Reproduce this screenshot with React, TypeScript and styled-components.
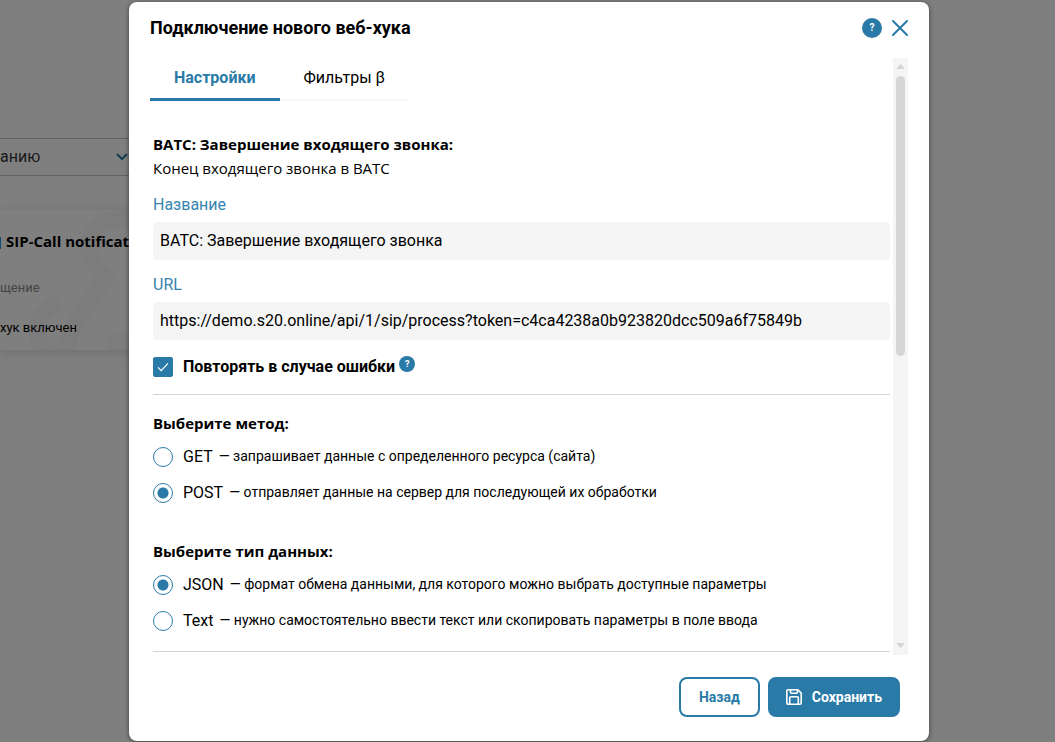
import React, { useId, useState } from "react";
import styled, { createGlobalStyle } from "styled-components";

const accent = "#2a7aa8";
const uiFont = `Roboto, "Liberation Sans", sans-serif`;
const headingFont = `"Open Sans", "Noto Sans", sans-serif`;

const GlobalStyle = createGlobalStyle`
  * { box-sizing: border-box; }
  html, body, #root { height: 100%; }
  body {
    margin: 0;
    overflow: hidden;
    background: #fff;
    color: #000;
    font: 16px/24px ${uiFont};
  }
  h1, h2, p, fieldset, legend { margin: 0; padding: 0; border: 0; }
  button, input, select { font: inherit; color: inherit; margin: 0; }
`;

/* Page behind the dialog */
const Page = styled.main`
  position: absolute;
  inset: 0;
  overflow: hidden;
  display: flex;
  flex-direction: column;
  gap: 34px;
  padding: 138px 0 0;
`;

const SortBar = styled.div`
  width: calc(50vw - 389px);
  height: 38px;
  display: flex;
  align-items: center;
  justify-content: space-between;
  padding-right: 11px;
  border: solid #c4c4c4;
  border-width: 1px 0;
  color: #333;
`;

const HookCard = styled.article`
  position: relative;
  width: calc(50vw - 320px);
  height: 140px;
  padding: 19px 0 0;
  overflow: hidden;
  white-space: nowrap;
  display: flex;
  flex-direction: column;
  background: #fff;
  box-shadow: 0 2px 12px rgba(0, 0, 0, 0.14);
`;

const HookTitle = styled.h2`
  position: relative;
  font: 700 15px/24px ${headingFont};
  display: flex;
  gap: 5px;
`;

const HookMark = styled.span`
  width: 1px;
  height: 12px;
  margin-top: 8px;
  background: #2196f3;
`;

const HookStatus = styled.p`
  position: relative;
  margin-top: 23px;
  font-size: 13px;
  line-height: 24px;
  color: #888;
`;

const HookEnabled = styled.p`
  position: relative;
  margin-top: 16px;
  font-size: 13px;
  line-height: 24px;
`;

const Watermark = styled.svg`
  position: absolute;
  left: 30px;
  top: 0;
`;

/* Dialog */
const Backdrop = styled.div`
  position: relative;
  height: 100%;
  min-height: 0;
  display: flex;
  justify-content: center;
  padding: 2px 0 1px 3px;
  background: rgba(0, 0, 0, 0.5);
`;

const Dialog = styled.section`
  width: 100%;
  max-width: 800px;
  display: flex;
  flex-direction: column;
  padding: 0 21px 24px;
  border-radius: 8px;
  background: #fff;
  box-shadow: 0 1px 5px rgba(0, 0, 0, 0.5);
`;

const Header = styled.header`
  display: flex;
  align-items: center;
  gap: 10px;
  height: 52px;
  margin-bottom: 4px;
  flex: none;
`;

const Title = styled.h1`
  flex: 1;
  font-size: 18px;
  line-height: 24px;
  font-weight: 700;
`;

const HelpButton = styled.button<{ $size: number }>`
  width: ${(p) => p.$size}px;
  height: ${(p) => p.$size}px;
  padding: 0;
  border: 0;
  border-radius: 50%;
  background: ${accent};
  color: #fff;
  font-size: ${(p) => (p.$size > 16 ? 10 : 9)}px;
  line-height: ${(p) => p.$size}px;
  font-weight: 700;
  cursor: pointer;
`;

const CloseButton = styled.button`
  display: flex;
  padding: 0;
  border: 0;
  background: none;
  cursor: pointer;
`;

const Body = styled.div`
  flex: 1;
  min-height: 0;
  display: flex;
  gap: 3px;
`;

const Scroller = styled.div`
  flex: 1;
  min-width: 0;
  overflow-y: auto;
  scrollbar-width: none;
`;

const Tabs = styled.div`
  display: flex;
`;

const Tab = styled.button<{ $active: boolean }>`
  height: 43px;
  padding: 0 24px ${(p) => (p.$active ? 1 : 2)}px;
  border: 0;
  border-bottom: ${(p) => (p.$active ? `3px solid ${accent}` : "2px solid #f5f5f5")};
  background: none;
  color: ${(p) => (p.$active ? accent : "#000")};
  font-weight: ${(p) => (p.$active ? 700 : 400)};
  cursor: pointer;
`;

const Form = styled.form`
  padding: 31px 0 3px 3px;
`;

const Heading = styled.h2`
  font: 700 15px/24px ${headingFont};
`;

const Lead = styled.p`
  font: 400 15px/24px ${headingFont};
`;

const Field = styled.div`
  display: flex;
  flex-direction: column;
  gap: 5px;
  margin-top: 13px;
`;

const FieldLabel = styled.label`
  color: #3584b0;
`;

const TextInput = styled.input`
  width: 100%;
  height: 38px;
  padding: 0 7px 2px;
  border: 0;
  border-radius: 4px;
  background: #f5f5f5;
`;

const CheckRow = styled.div`
  display: flex;
  align-items: center;
  gap: 10px;
  margin-top: 15px;
  height: 24px;
`;

const Checkbox = styled.input`
  appearance: none;
  width: 20px;
  height: 20px;
  border: 1px solid ${accent};
  border-radius: 2px;
  background: #fff;

  &:checked {
    background: ${accent}
      url("data:image/svg+xml,%3Csvg xmlns='http://www.w3.org/2000/svg' viewBox='0 0 18 18' fill='none' stroke='white' stroke-width='1.2'%3E%3Cpath d='M4 9.4l3.2 3.2L14 5.4'/%3E%3C/svg%3E");
  }
`;

const CheckLabel = styled.label`
  font-weight: 700;
`;

const CheckHelp = styled.span`
  display: flex;
  margin: 0 0 6px -6px;
`;

const Divider = styled.hr<{ $gap: number }>`
  height: 1px;
  margin: ${(p) => p.$gap}px 0 0;
  border: 0;
  background: #d4d4d4;
`;

const Choices = styled.fieldset`
  margin-top: 16px;
  min-width: 0;

  & + & {
    margin-top: 34px;
  }
`;

const Legend = styled.legend`
  font: 700 15px/24px ${headingFont};
`;

const Choice = styled.label`
  display: flex;
  align-items: center;
  gap: 10px;
  height: 24px;
  margin-top: 10px;
  cursor: pointer;

  & + & {
    margin-top: 12px;
  }
`;

const Radio = styled.input`
  appearance: none;
  flex: none;
  width: 20px;
  height: 20px;
  border: 1px solid ${accent};
  border-radius: 50%;

  &:checked {
    background: radial-gradient(circle, ${accent} 5px, transparent 6px);
  }
`;

const ChoiceText = styled.span`
  display: flex;
  gap: 6px;
`;

const Hint = styled.small`
  font-size: 14px;
  line-height: 22px;
`;

const ScrollRail = styled.div`
  width: 15px;
  flex: none;
  display: flex;
  flex-direction: column;
  align-items: center;
  padding: 6px 0 7px;
  background: #f5f5f5;
`;

const ScrollThumb = styled.div`
  width: 9px;
  height: 48%;
  margin: 7px 0 auto;
  border-radius: 5px;
  background: #d6d6d6;
`;

const Footer = styled.footer`
  display: flex;
  justify-content: flex-end;
  gap: 8px;
  margin-top: 22px;
  padding-right: 8px;
  flex: none;
`;

const Action = styled.button<{ $primary?: boolean }>`
  display: flex;
  align-items: center;
  gap: 10px;
  height: 40px;
  padding: 0 ${(p) => (p.$primary ? 16 : 18)}px;
  border: 2px solid ${accent};
  border-radius: 8px;
  background: ${(p) => (p.$primary ? accent : "#fff")};
  color: ${(p) => (p.$primary ? "#fff" : accent)};
  font-size: 14px;
  font-weight: 700;
  cursor: pointer;
`;

function ScrollArrow({ down }: { down?: boolean }) {
  return (
    <svg width="9" height="5" viewBox="0 0 9 5" aria-hidden="true">
      <path d={down ? "M0 0h9L4.500 5z" : "M0 5h9L4.500 0z"} fill="#d6d6d6" />
    </svg>
  );
}

function SaveIcon() {
  return (
    <svg width="16" height="16" viewBox="0 0 16 16" fill="none" stroke="currentColor" strokeWidth="1.600" aria-hidden="true">
      <path d="M2 .8h9.800L15.200 4.200V14a1.200 1.200 0 0 1-1.200 1.200H2A1.200 1.200 0 0 1 .8 14V2A1.200 1.200 0 0 1 2 .8z" />
      <path d="M4.500 1v2.300a1 1 0 0 0 1 1h5a1 1 0 0 0 1-1V1" />
      <path d="M3.700 15V9a1.200 1.200 0 0 1 1.200-1.200h6.200A1.200 1.200 0 0 1 12.300 9v6" />
    </svg>
  );
}

const methods = [
  { name: "GET", hint: "запрашивает данные с определенного ресурса (сайта)" },
  { name: "POST", hint: "отправляет данные на сервер для последующей их обработки" },
];

const formats = [
  { name: "JSON", hint: "формат обмена данными, для которого можно выбрать доступные параметры" },
  { name: "Text", hint: "нужно самостоятельно ввести текст или скопировать параметры в поле ввода" },
];

function ChoiceGroup(props: { title: string; options: typeof methods; initial: string }) {
  const group = useId();
  const [value, setValue] = useState(props.initial);
  return (
    <Choices>
      <Legend>{props.title}</Legend>
      {props.options.map((o) => (
        <Choice key={o.name}>
          <Radio type="radio" name={group} checked={value === o.name} onChange={() => setValue(o.name)} />
          <ChoiceText>
            {o.name}
            <Hint>— {o.hint}</Hint>
          </ChoiceText>
        </Choice>
      ))}
    </Choices>
  );
}

export default function App() {
  const [tab, setTab] = useState(0);
  return (
    <>
      <GlobalStyle />
      <Page aria-hidden="true">
        <SortBar>
          <span>анию</span>
          <svg width="12" height="8" viewBox="0 0 12 8" fill="none" stroke={accent} strokeWidth="2">
            <path d="M1 1l5 5 5-5" />
          </svg>
        </SortBar>
        <HookCard>
          <Watermark width="160" height="142" viewBox="0 0 160 142" fill="none" stroke="#f8f8f8" strokeWidth="17">
            <path d="M100 10C72 4 50 26 62 48c3 8 8 13 14 18L42 119" />
            <path d="M30 92C5 100 2 124 17 146M42 119c-2 12-8 20-16 26M78 132h80" />
          </Watermark>
          <HookTitle>
            <HookMark />
            SIP-Call notification
          </HookTitle>
          <HookStatus>щение</HookStatus>
          <HookEnabled>хук включен</HookEnabled>
        </HookCard>
      </Page>
      <Backdrop>
        <Dialog role="dialog" aria-labelledby="dialog-title">
          <Header>
            <Title id="dialog-title">Подключение нового веб-хука</Title>
            <HelpButton type="button" $size={20}>?</HelpButton>
            <CloseButton type="button" aria-label="Закрыть">
              <svg width="16" height="16" viewBox="0 0 16 16" stroke={accent} strokeWidth="2" strokeLinecap="round">
                <path d="M1 1l14 14M15 1L1 15" />
              </svg>
            </CloseButton>
          </Header>
          <Body>
            <Scroller>
              <Tabs role="tablist">
                {["Настройки", "Фильтры β"].map((name, i) => (
                  <Tab key={name} type="button" role="tab" aria-selected={tab === i} $active={tab === i} onClick={() => setTab(i)}>
                    {name}
                  </Tab>
                ))}
              </Tabs>
              <Form id="hook-form" onSubmit={(e) => e.preventDefault()}>
                <Heading>ВАТС: Завершение входящего звонка:</Heading>
                <Lead>Конец входящего звонка в ВАТС</Lead>
                <Field>
                  <FieldLabel htmlFor="hook-name">Название</FieldLabel>
                  <TextInput id="hook-name" defaultValue="ВАТС: Завершение входящего звонка" />
                </Field>
                <Field>
                  <FieldLabel htmlFor="hook-url">URL</FieldLabel>
                  <TextInput
                    id="hook-url"
                    defaultValue="https://demo.s20.online/api/1/sip/process?token=c4ca4238a0b923820dcc509a6f75849b"
                  />
                </Field>
                <CheckRow>
                  <Checkbox type="checkbox" id="hook-retry" defaultChecked />
                  <CheckLabel htmlFor="hook-retry">Повторять в случае ошибки</CheckLabel>
                  <CheckHelp>
                    <HelpButton type="button" $size={16}>?</HelpButton>
                  </CheckHelp>
                </CheckRow>
                <Divider $gap={15} />
                <ChoiceGroup title="Выберите метод:" options={methods} initial="POST" />
                <ChoiceGroup title="Выберите тип данных:" options={formats} initial="JSON" />
                <Divider $gap={18} />
              </Form>
            </Scroller>
            <ScrollRail aria-hidden="true">
              <ScrollArrow />
              <ScrollThumb />
              <ScrollArrow down />
            </ScrollRail>
          </Body>
          <Footer>
            <Action type="button">Назад</Action>
            <Action type="submit" form="hook-form" $primary>
              <SaveIcon />
              Сохранить
            </Action>
          </Footer>
        </Dialog>
      </Backdrop>
    </>
  );
}
